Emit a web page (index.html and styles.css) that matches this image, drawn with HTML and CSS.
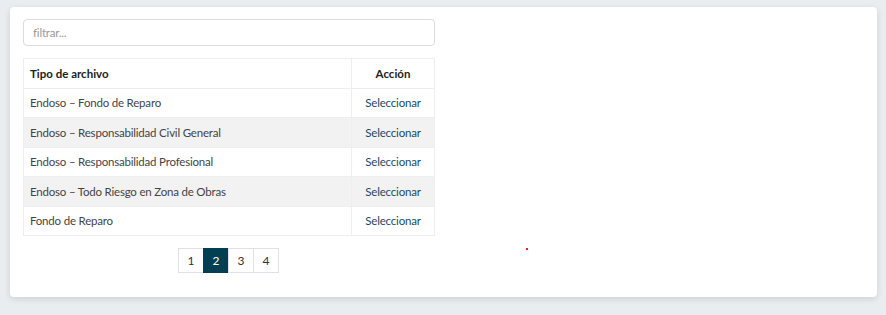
FILE: index.html
```html
<!DOCTYPE html>
<html lang="es">
<head>
<meta charset="utf-8">
<link rel="stylesheet" href="styles.css">
</head>
<body>
<div class="card">
  <div class="panel">
    <input class="filter" type="text" placeholder="filtrar...">
    <table class="grid">
      <thead>
        <tr><th class="c-type">Tipo de archivo</th><th class="c-act">Acción</th></tr>
      </thead>
      <tbody>
        <tr><td>Endoso – Fondo de Reparo</td><td class="c-act"><a href="#">Seleccionar</a></td></tr>
        <tr class="alt"><td>Endoso – Responsabilidad Civil General</td><td class="c-act"><a href="#">Seleccionar</a></td></tr>
        <tr><td>Endoso – Responsabilidad Profesional</td><td class="c-act"><a href="#">Seleccionar</a></td></tr>
        <tr class="alt"><td>Endoso – Todo Riesgo en Zona de Obras</td><td class="c-act"><a href="#">Seleccionar</a></td></tr>
        <tr><td>Fondo de Reparo</td><td class="c-act"><a href="#">Seleccionar</a></td></tr>
      </tbody>
    </table>
    <div class="pager">
      <span class="pg">1</span><span class="pg active">2</span><span class="pg">3</span><span class="pg">4</span>
    </div>
  </div>
  <span class="dot"></span>
</div>
</body>
</html>
```
FILE: styles.css
```css
html, body {
  margin: 0;
  padding: 0;
}
body {
  background: #e9edf0;
  font-family: Lato, "Noto Sans", sans-serif;
  font-size: 11.5px;
  letter-spacing: -0.2px;
  color: #444;
  padding: 7px 9px 0 10px;
  height: 315px;
  box-sizing: border-box;
}
.card {
  position: relative;
  background: #fff;
  border-radius: 4px;
  height: 290px;
  box-shadow: 0 2px 6px rgba(0,0,0,0.12);
  padding: 12px 13px;
  box-sizing: border-box;
}
.panel {
  width: 412px;
}
.filter {
  display: block;
  width: 100%;
  height: 27px;
  box-sizing: border-box;
  border: 1px solid #d9dde2;
  border-radius: 4px;
  padding: 0 9px;
  font-family: inherit;
  font-size: 11.5px;
  letter-spacing: -0.2px;
  color: #444;
  outline: none;
}
.filter::placeholder {
  color: #9a9a9a;
}
.grid {
  margin-top: 12px;
  width: 100%;
  border-collapse: collapse;
  border: 1px solid #eeeeee;
}
.grid th, .grid td {
  height: 28.5px;
  padding: 0 6px;
  border: 1px solid #eeeeee;
  text-align: left;
  vertical-align: middle;
}
.grid th {
  font-weight: 700;
  letter-spacing: 0;
  color: #222;
}
.grid .c-act {
  width: 70px;
  text-align: center;
}
.grid tr.alt td {
  background: #f2f2f2;
}
.grid a {
  color: #1c4a63;
  text-decoration: none;
}
.pager {
  display: flex;
  justify-content: center;
  margin-top: 12px;
}
.pg {
  width: 26px;
  height: 25px;
  box-sizing: border-box;
  border: 1px solid #dee2e6;
  margin-left: -1px;
  display: flex;
  align-items: center;
  justify-content: center;
  font-size: 12px;
  color: #333;
  background: #fff;
}
.pg.active {
  background: #033f53;
  border-color: #033f53;
  color: #fff;
}
.dot {
  position: absolute;
  left: 516px;
  top: 241px;
  width: 2px;
  height: 2px;
  background: #e8242a;
}
```
